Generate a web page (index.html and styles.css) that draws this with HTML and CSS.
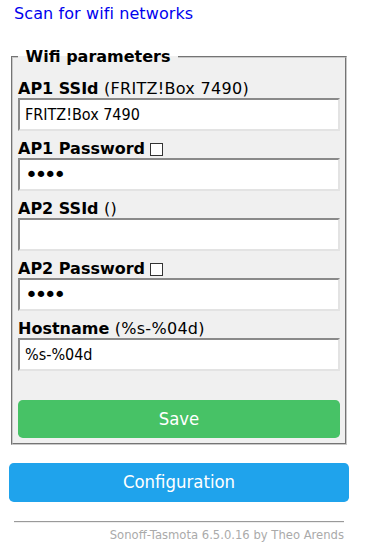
FILE: index.html
```html
<html>
	<head>
<link rel="stylesheet" href="styles.css">
	</head>
	<body>
		<div class="main">
			<div class="box"><a href="#">Scan for wifi networks</a></div>
			<br>
			<fieldset>
				<legend><b>&nbsp;Wifi parameters&nbsp;</b></legend>
				<form>
					<p><b>AP1 SSId</b> (FRITZ!Box 7490)<br><input type="text" value="FRITZ!Box 7490"></p>
					<p><b>AP1 Password</b><input type="checkbox" class="check"><br><input type="password" class="pwd" value="****"></p>
					<p><b>AP2 SSId</b> ()<br><input type="text" value=""></p>
					<p><b>AP2 Password</b><input type="checkbox" class="check"><br><input type="password" class="pwd" value="****"></p>
					<p><b>Hostname</b> (%s-%04d)<br><input type="text" value="%s-%04d"></p>
					<br>
					<button class="bgrn">Save</button>
				</form>
			</fieldset>
			<div class="config">
				<button>Configuration</button>
			</div>
			<div class="footer">
				<hr>
				<a href="#">Sonoff-Tasmota 6.5.0.16 by Theo Arends</a>
			</div>
		</div>
	</body>
</html>
```
FILE: styles.css
```css
body {
    margin: 0;
    font-family: "DejaVu Sans", Verdana, sans-serif;
    font-size: 16px;
    line-height: 19px;
    background: #ffffff;
}

.main {
    width: 340px;
    margin-left: 9px;
}

.box {
    padding: 4px 5px 5px 5px;
}

a {
    color: #0000ee;
    text-decoration: none;
    letter-spacing: 0.1px;
}

form {
    margin: 0;
}

fieldset {
    margin: 0 2px;
    padding: 5px 5px 5px 5px;
    background: #f0f0f0;
    border: 2px groove #c8c8c8;
}

fieldset p {
    letter-spacing: 0.3px;
}

fieldset b {
    letter-spacing: 0;
}

legend {
    padding: 0 2px;
}

p {
    margin: 8px 0;
}

input {
    width: 100%;
    box-sizing: border-box;
    padding: 5px 5px 5px 5px;
    margin: 0;
    font-family: "DejaVu Sans Condensed", "DejaVu Sans", sans-serif;
    font-size: 16px;
    line-height: 19px;
    letter-spacing: 0;
    height: 33px;
    color: #000000;
    background: #ffffff;
    border-style: solid;
    border-width: 2px;
    border-color: #8a8a8a #e3e3e3 #e3e3e3 #8a8a8a;
    outline: none;
}

input.pwd {
    font-family: "DejaVu Sans", sans-serif;
    font-size: 22px;
    letter-spacing: -3.6px;
    padding: 0 5px;
}

input.check {
    -webkit-appearance: none;
    appearance: none;
    width: 13px;
    height: 13px;
    padding: 0;
    margin: 0 0 0 5px;
    border: 1px solid #333333;
    vertical-align: -2px;
}

button {
    display: block;
    border: 0;
    border-radius: 0.3rem;
    background-color: #1fa3ec;
    color: #ffffff;
    font-family: "DejaVu Sans Condensed", "DejaVu Sans", sans-serif;
    font-size: 18.4px;
    line-height: 2.4rem;
    padding: 0;
    width: 100%;
}

.bgrn {
    margin-top: 2px;
    background-color: #47c266;
}

.config {
    margin-top: 18px;
}

.footer {
    text-align: right;
    font-size: 11.6px;
    line-height: 13px;
    padding: 0 5px;
}

.footer hr {
    margin: 19px 0 6px 0;
    border: 0;
    border-top: 1px solid #9a9a9a;
    border-bottom: 1px solid #eeeeee;
}

.footer a {
    color: #aaaaaa;
    letter-spacing: 0;
}
```
